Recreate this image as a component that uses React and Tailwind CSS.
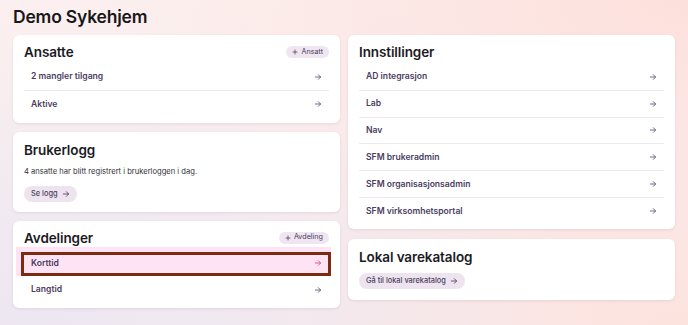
// Dashboard overview for a care home
const Arrow = ({ className = "" }) => (
  <svg className={`w-[8px] h-[8px] ${className}`} fill="none" stroke="currentColor" viewBox="0 0 24 24">
    <path strokeLinecap="round" strokeLinejoin="round" strokeWidth={2.5} d="M4 12h15m-6-7l7 7-7 7" />
  </svg>
);

const Plus = () => (
  <svg className="w-[6px] h-[6px]" fill="none" stroke="currentColor" viewBox="0 0 24 24">
    <path strokeLinecap="round" strokeWidth={3} d="M12 4v16M4 12h16" />
  </svg>
);

const Card = ({ children, className = "" }) => (
  <div className={`bg-white rounded-[6px] shadow-[0_1px_3px_rgba(80,40,80,0.10)] px-[11px] ${className}`}>
    {children}
  </div>
);

const Heading = ({ children }) => (
  <h2 className="text-[13.5px] leading-[18px] font-semibold text-[#1b1b1f] tracking-[-0.1px]">{children}</h2>
);

const Pill = ({ children }) => (
  <button className="h-[12px] px-[6px] rounded-full bg-[#efe6f2] text-[7.2px] text-[#4a3d5a] flex items-center gap-[3px]">
    <Plus />
    {children}
  </button>
);

const LinkButton = ({ children }) => (
  <button className="h-[16px] px-[7px] rounded-full bg-[#ede4f0] text-[7.4px] font-medium text-[#4a3d5a] flex items-center gap-[4px]">
    {children}
    <Arrow className="text-[#4a3d5a]" />
  </button>
);

const Row = ({ label, last }) => (
  <div className={`h-[26.8px] px-[7px] flex items-center justify-between ${last ? "" : "border-b border-[#eeeaf0]"}`}>
    <span className="text-[8.6px] font-semibold text-[#4b3c5f]">{label}</span>
    <Arrow className="text-[#5b4d6c]" />
  </div>
);

const settings = [
  "AD integrasjon",
  "Lab",
  "Nav",
  "SFM brukeradmin",
  "SFM organisasjonsadmin",
  "SFM virksomhetsportal",
];

export default function App() {
  return (
    <div
      className="w-[688px] h-[325px] overflow-hidden px-[13px] pt-[5px] font-['Inter',sans-serif] bg-[radial-gradient(ellipse_at_100%_0%,#fde0dc_0%,rgba(253,224,220,0)_60%),radial-gradient(ellipse_at_0%_100%,#ede7f2_0%,rgba(237,231,242,0)_60%),radial-gradient(ellipse_at_100%_100%,#fde3de_0%,rgba(253,227,222,0)_55%),linear-gradient(#fbf0ef,#f6ecef)]"
    >
      <h1 className="text-[17.5px] leading-[24px] font-semibold text-[#18181b] tracking-[-0.2px]">Demo Sykehjem</h1>

      <div className="mt-[6px] grid grid-cols-2 gap-x-[8px] items-start">
        {/* Left column */}
        <div className="flex flex-col gap-[9px]">
          <Card className="pt-[8px] pb-[5px]">
            <div className="flex items-center justify-between h-[18px]">
              <Heading>Ansatte</Heading>
              <Pill>Ansatt</Pill>
            </div>
            <div className="mt-[3px]">
              <Row label="2 mangler tilgang" />
              <Row label="Aktive" last />
            </div>
          </Card>

          <Card className="pt-[9px] pb-[10px]">
            <Heading>Brukerlogg</Heading>
            <p className="mt-[6px] text-[7.6px] leading-[14px] text-[#34323a]">
              4 ansatte har blitt registrert i brukerloggen i dag.
            </p>
            <div className="mt-[7px] flex">
              <LinkButton>Se logg</LinkButton>
            </div>
          </Card>

          <Card className="pt-[8px] pb-[5px]">
            <div className="flex items-center justify-between h-[18px]">
              <Heading>Avdelinger</Heading>
              <Pill>Avdeling</Pill>
            </div>
            <div className="mt-[3px]">
              <div className="relative">
                <div className="absolute -top-[3px] -left-[8px] -right-[2px] bottom-0 bg-[#fde3f4]" />
                <div className="absolute top-[2px] -left-[3px] -right-[2px] bottom-0 border-[3px] border-[#7c2b12]" />
                <div className="relative h-[26.8px] px-[7px] flex items-center justify-between">
                  <span className="text-[8.6px] font-semibold text-[#4b3c5f]">Korttid</span>
                  <Arrow className="text-[#d9418f]" />
                </div>
              </div>
              <Row label="Langtid" last />
            </div>
          </Card>
        </div>

        {/* Right column */}
        <div className="flex flex-col gap-[10px]">
          <Card className="pt-[8px] pb-[4px]">
            <div className="h-[18px] flex items-center">
              <Heading>Innstillinger</Heading>
            </div>
            <div className="mt-[3px]">
              {settings.map((s, i) => (
                <Row key={s} label={s} last={i === settings.length - 1} />
              ))}
            </div>
          </Card>

          <Card className="pt-[9px] pb-[11px]">
            <Heading>Lokal varekatalog</Heading>
            <div className="mt-[7px] flex">
              <LinkButton>Gå til lokal varekatalog</LinkButton>
            </div>
          </Card>
        </div>
      </div>
    </div>
  );
}
